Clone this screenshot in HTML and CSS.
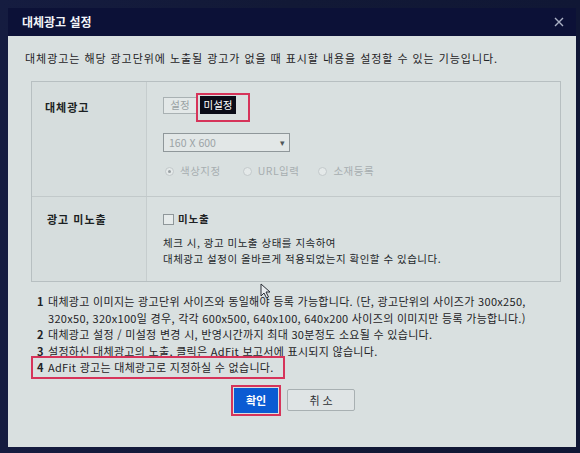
FILE: index.html
```html
<!DOCTYPE html>
<html lang="ko">
<head>
<meta charset="utf-8">
<title>대체광고 설정</title>
<link rel="stylesheet" href="styles.css">
</head>
<body>
<div class="dialog">
  <div class="titlebar">
    <span class="title">대체광고 설정</span>
    <svg class="close" width="10" height="10" viewBox="0 0 10 10"><path d="M1 1L9 9M9 1L1 9" stroke="#aab0c4" stroke-width="1.4" fill="none"/></svg>
  </div>
  <div class="content">
    <p class="intro">대체광고는 해당 광고단위에 노출될 광고가 없을 때 표시할 내용을 설정할 수 있는 기능입니다.</p>
    <div class="box">
      <div class="row row1">
        <div class="label">대체광고</div>
        <div class="field">
          <div class="toggle">
            <span class="tbtn off">설정</span>
            <span class="tbtn on">미설정<span class="mark"></span></span>
          </div>
          <div class="select"><span>160 X 600</span><span class="arrow">▾</span></div>
          <div class="radios">
            <span class="radio"><span class="dot sel"></span>색상지정</span>
            <span class="radio"><span class="dot"></span>URL입력</span>
            <span class="radio"><span class="dot"></span>소재등록</span>
          </div>
        </div>
      </div>
      <div class="row row2">
        <div class="label">광고 미노출</div>
        <div class="field">
          <div class="check"><span class="cbox"></span>미노출</div>
          <p class="desc">체크 시, 광고 미노출 상태를 지속하여<br>대체광고 설정이 올바르게 적용되었는지 확인할 수 있습니다.</p>
        </div>
      </div>
    </div>
    <ol class="notes">
      <li><span class="num">1</span><span>대체광고 이미지는 광고단위 사이즈와 동일해야 등록 가능합니다. (단, 광고단위의 사이즈가 300x250,<br>320x50, 320x100일 경우, 각각 600x500, 640x100, 640x200 사이즈의 이미지만 등록 가능합니다.)</span></li>
      <li><span class="num">2</span><span>대체광고 설정 / 미설정 변경 시, 반영시간까지 최대 30분정도 소요될 수 있습니다.</span></li>
      <li><span class="num">3</span><span>설정하신 대체광고의 노출, 클릭은 AdFit 보고서에 표시되지 않습니다.</span></li>
      <li class="hl"><span class="num">4</span><span>AdFit 광고는 대체광고로 지정하실 수 없습니다.</span></li>
    </ol>
    <div class="actions">
      <span class="okwrap"><button class="btn ok">확인</button></span>
      <button class="btn cancel">취소</button>
    </div>
  </div>
</div>
<svg class="cursor" width="11" height="16" viewBox="0 0 11 16"><path d="M1 1L1 13L4 10L6.5 15L8.5 14L6 9L10 9Z" fill="#e8ecee" stroke="#2a2e36" stroke-width="1"/></svg>
</body>
</html>
```
FILE: styles.css
```css
html, body {
  margin: 0;
  padding: 0;
}
body {
  width: 580px;
  height: 453px;
  overflow: hidden;
  background: linear-gradient(90deg, #151c40 0%, #121936 50%, #101735 100%);
  font-family: "Noto Sans CJK KR", "Noto Sans", sans-serif;
  color: #1f2325;
  position: relative;
}
.dialog {
  margin: 8px 0 0 8px;
  width: 568px;
}
.titlebar {
  height: 28px;
  background: #0c1137;
  display: flex;
  align-items: center;
  justify-content: space-between;
  padding: 0 12px 0 14px;
}
.title {
  color: #f2f4f8;
  font-size: 12px;
  font-weight: bold;
  line-height: 14px;
}
.close {
  display: block;
}
.content {
  height: 411px;
  box-sizing: border-box;
  background: #d9e0e0;
  padding: 14px 15px 0 17px;
}
.intro {
  margin: 0;
  font-size: 11px;
  line-height: 16px;
  letter-spacing: 0.95px;
  color: #1f2326;
}
.box {
  margin: 15px 0 0 6px;
  border: 1px solid #b7bfc1;
}
.row {
  display: grid;
  grid-template-columns: 115px 1fr;
}
.row1 {
  border-bottom: 1px solid #c2c9ca;
}
.label {
  border-right: 1px solid #c6cdce;
  background: #d6dddd;
  font-size: 11px;
  font-weight: bold;
  line-height: 14px;
  letter-spacing: 1px;
  padding: 18px 0 0 13px;
  color: #1b1f22;
}
.row2 .label {
  padding-top: 15px;
  padding-left: 15px;
}
.field {
  padding: 14px 0 18px 16px;
  font-size: 10.5px;
}
.row2 .field {
  padding: 15px 0 14px 16px;
}
.toggle {
  display: flex;
  align-items: center;
  gap: 3px;
  height: 18px;
}
.tbtn {
  display: inline-flex;
  align-items: center;
  justify-content: center;
  box-sizing: border-box;
  line-height: 14px;
}
.tbtn.off {
  width: 34px;
  height: 17px;
  border: 1px solid #a9b1b3;
  background: #e3e8e8;
  color: #9aa2a4;
}
.tbtn.on {
  width: 36px;
  height: 18px;
  background: #0b0c18;
  color: #ffffff;
  position: relative;
}
.mark {
  position: absolute;
  left: -4px;
  top: -3px;
  width: 54px;
  height: 29px;
  box-sizing: border-box;
  border: 2px solid #d6345a;
}
.select {
  margin-top: 19px;
  width: 127px;
  height: 19px;
  box-sizing: border-box;
  border: 1px solid #8f979a;
  background: #e2e7e7;
  display: flex;
  align-items: center;
  justify-content: space-between;
  padding: 0 4px 0 5px;
  color: #9ca3a6;
  line-height: 14px;
}
.arrow {
  color: #50575a;
  font-size: 9px;
}
.radios {
  margin-top: 12px;
  display: flex;
  line-height: 14px;
  color: #a7aeb0;
  letter-spacing: 0.5px;
}
.radio {
  display: inline-flex;
  align-items: center;
  margin-right: 20px;
}
.radio:nth-child(2) {
  margin-right: 17px;
}
.dot {
  width: 9px;
  height: 9px;
  box-sizing: border-box;
  border-radius: 50%;
  border: 1px solid #c3c9cb;
  background: #e4e9e9;
  margin: 0 6px 0 2px;
  position: relative;
}
.dot.sel::after {
  content: "";
  position: absolute;
  left: 2px;
  top: 2px;
  width: 3px;
  height: 3px;
  border-radius: 50%;
  background: #9aa1a4;
}
.check {
  display: flex;
  align-items: center;
  line-height: 14px;
  font-weight: bold;
  letter-spacing: 0.8px;
  color: #1f2325;
}
.cbox {
  width: 11px;
  height: 11px;
  box-sizing: border-box;
  border: 1px solid #8f979a;
  background: #e6ebeb;
  margin-right: 4px;
}
.desc {
  margin: 9px 0 0;
  line-height: 16px;
  letter-spacing: 0.5px;
  color: #23272a;
}
.notes {
  list-style: none;
  margin: 11px 0 0 12px;
  padding: 0;
  font-size: 11px;
  line-height: 16.5px;
  letter-spacing: 0.3px;
  color: #1f2326;
}
.notes li {
  display: flex;
}
.num {
  flex: none;
  width: 11px;
  font-weight: bold;
  letter-spacing: 0;
}
.notes li.hl {
  display: inline-flex;
  margin: -3px 0 0 -6px;
  padding: 1px 9px 1px 4px;
  border: 2px solid #d6345a;
}
.actions {
  display: flex;
  justify-content: center;
  align-items: center;
  gap: 6px;
  margin-top: 6px;
}
.okwrap {
  display: inline-block;
  border: 2px solid #d6345a;
  padding: 1px;
  line-height: 0;
}
.btn {
  font-family: "Noto Sans CJK KR", "Noto Sans", sans-serif;
  font-size: 11px;
  margin: 0;
  padding: 0;
  cursor: pointer;
}
.ok {
  width: 44px;
  height: 25px;
  border: none;
  background: #0b5bd3;
  color: #ffffff;
  font-weight: bold;
}
.cancel {
  width: 68px;
  height: 22px;
  border: 1px solid #a8b0b2;
  border-radius: 2px;
  background: #dfe4e5;
  color: #2c3033;
  letter-spacing: 3px;
  text-indent: 3px;
}
.cursor {
  position: absolute;
  left: 260px;
  top: 283px;
}
```
